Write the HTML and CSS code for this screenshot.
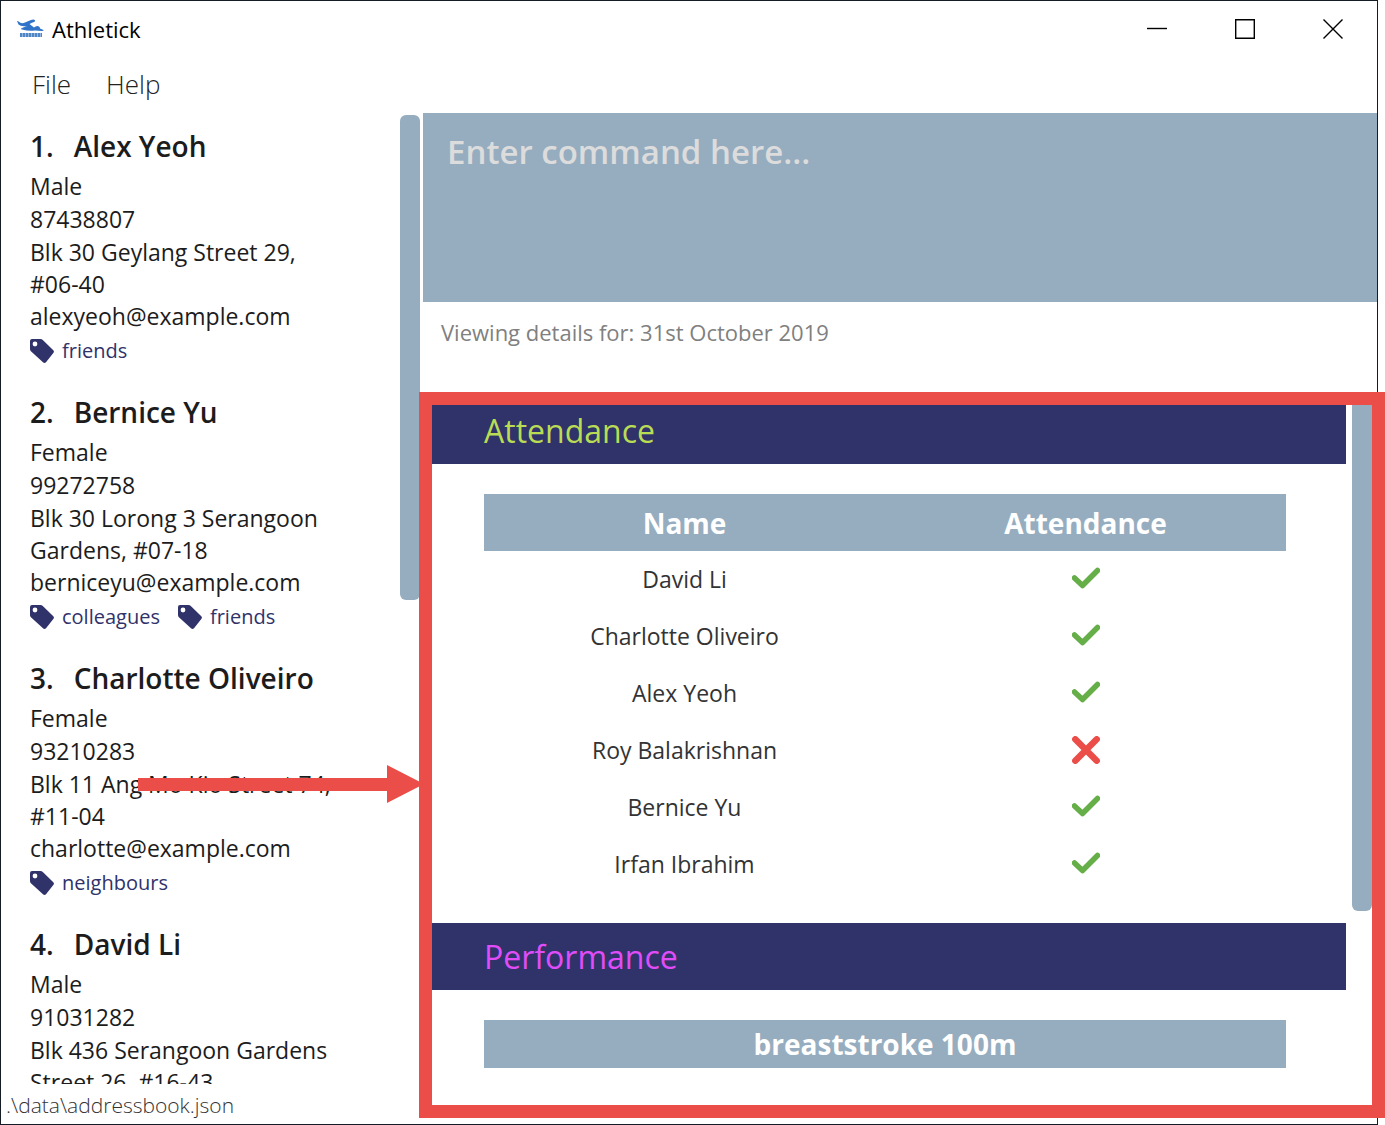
FILE: index.html
```html
<!DOCTYPE html>
<html lang="en">
<head>
<meta charset="utf-8">
<title>Athletick</title>
<link rel="stylesheet" href="styles.css">
</head>
<body>
<svg class="sprites" aria-hidden="true">
  <symbol id="tag" viewBox="0 0 24 24"><path fill-rule="evenodd" d="M2 0H10.500Q11.800 0 12.800 .9L23.300 11.200Q24.600 12.600 23.300 14L16 23.200Q14.500 24.700 13 23.300L.9 12.200Q0 11.300 0 10V2Q0 0 2 0ZM5 2.600A2.400 2.400 0 1 0 5 7.400A2.400 2.400 0 1 0 5 2.600Z"/></symbol>
  <symbol id="check" viewBox="0 0 28 28"><path d="M2.500 13L10.500 20.500L25.500 5.500" fill="none" stroke="#65ae48" stroke-width="5.500" stroke-linecap="round" stroke-linejoin="round"/></symbol>
  <symbol id="cross" viewBox="0 0 28 28"><path d="M3.300 3.300L24.700 24.700M24.700 3.300L3.300 24.700" fill="none" stroke="#eb4d49" stroke-width="6.500" stroke-linecap="round"/></symbol>
</svg>

<div class="window">
  <header class="titlebar">
    <svg class="logo" viewBox="0 0 27 19" aria-hidden="true">
      <path fill="#2f74c8" d="M0 1.500Q1 1 3 3Q5 4.500 8 3L14 .5Q17-.5 18 .8Q18.500 2.300 15 3.300L12.500 4.500L17 8Q18 7 20 6.500Q23 6.500 23 9L26.500 10.500Q27 11.500 25 11.500Q21 11 18 11Q12 12 5 10Q3 9.500 5 8.500L10 6.500Q4 7.500 1.500 5Z"/>
      <path fill="none" stroke="#4f86c6" stroke-width="4" stroke-dasharray="2.600 .4" d="M3 15.500H25"/>
    </svg>
    <h1 class="title">Athletick</h1>
    <div class="window-buttons">
      <button class="window-button" aria-label="Minimize"><svg viewBox="0 0 20 20"><path d="M0 9.500H20"/></svg></button>
      <button class="window-button" aria-label="Maximize"><svg viewBox="0 0 20 20"><path d="M.7 .7H19.300V19.300H.7Z"/></svg></button>
      <button class="window-button" aria-label="Close"><svg viewBox="0 0 20 20"><path d="M.5 .5L19.500 19.500M19.500 .5L.5 19.500"/></svg></button>
    </div>
  </header>

  <nav class="menubar">
    <button class="menu">File</button>
    <button class="menu">Help</button>
  </nav>

  <main class="content">
    <aside class="sidebar">
      <ol class="people">
        <li class="person">
          <h2 class="person-name"><span>1.</span><span>Alex Yeoh</span></h2>
          <p>Male</p>
          <p>87438807</p>
          <p class="address">Blk 30 Geylang Street 29, <span class="unit">#06-40</span></p>
          <p>alexyeoh@example.com</p>
          <div class="tags"><span class="tag"><svg><use href="#tag"/></svg>friends</span></div>
        </li>
        <li class="person">
          <h2 class="person-name"><span>2.</span><span>Bernice Yu</span></h2>
          <p>Female</p>
          <p>99272758</p>
          <p class="address">Blk 30 Lorong 3 Serangoon Gardens, <span class="unit">#07-18</span></p>
          <p>berniceyu@example.com</p>
          <div class="tags"><span class="tag"><svg><use href="#tag"/></svg>colleagues</span><span class="tag"><svg><use href="#tag"/></svg>friends</span></div>
        </li>
        <li class="person">
          <h2 class="person-name"><span>3.</span><span>Charlotte Oliveiro</span></h2>
          <p>Female</p>
          <p>93210283</p>
          <p class="address">Blk 11 Ang Mo Kio Street 74, <span class="unit">#11-04</span></p>
          <p>charlotte@example.com</p>
          <div class="tags"><span class="tag"><svg><use href="#tag"/></svg>neighbours</span></div>
        </li>
        <li class="person">
          <h2 class="person-name"><span>4.</span><span>David Li</span></h2>
          <p>Male</p>
          <p>91031282</p>
          <p class="address">Blk 436 Serangoon Gardens Street 26, <span class="unit">#16-43</span></p>
        </li>
      </ol>
      <div class="scroll-thumb people-thumb"></div>
    </aside>

    <section class="workspace">
      <textarea class="command" aria-label="Command" placeholder="Enter command here..."></textarea>
      <p class="result">Viewing details for: 31st October 2019</p>

      <div class="details">
        <div class="details-body">
          <h2 class="section-title attendance-title">Attendance</h2>
          <table class="sheet">
            <thead><tr><th>Name</th><th>Attendance</th></tr></thead>
            <tbody>
              <tr><td>David Li</td><td><svg class="mark" role="img" aria-label="Present"><use href="#check"/></svg></td></tr>
              <tr><td>Charlotte Oliveiro</td><td><svg class="mark" role="img" aria-label="Present"><use href="#check"/></svg></td></tr>
              <tr><td>Alex Yeoh</td><td><svg class="mark" role="img" aria-label="Present"><use href="#check"/></svg></td></tr>
              <tr><td>Roy Balakrishnan</td><td><svg class="mark" role="img" aria-label="Absent"><use href="#cross"/></svg></td></tr>
              <tr><td>Bernice Yu</td><td><svg class="mark" role="img" aria-label="Present"><use href="#check"/></svg></td></tr>
              <tr><td>Irfan Ibrahim</td><td><svg class="mark" role="img" aria-label="Present"><use href="#check"/></svg></td></tr>
            </tbody>
          </table>
          <h2 class="section-title performance-title">Performance</h2>
          <h3 class="event">breaststroke 100m</h3>
        </div>
        <div class="scroll-thumb details-thumb"></div>
        <div class="callout"></div>
        <svg class="callout-arrow" viewBox="0 0 286 38" aria-hidden="true"><path d="M0 13H249V0L286 19L249 38V26H0Z"/></svg>
      </div>
    </section>
  </main>

  <footer class="statusbar">.\data\addressbook.json</footer>
</div>
</body>
</html>
```

FILE: styles.css
```css
* { box-sizing: border-box; }

body {
  margin: 0;
  background: #fff;
  color: #1c1c1c;
  font-family: "Open Sans", "Noto Sans", sans-serif;
  font-size: 23px;
}

h1, h2, h3, p, ol { margin: 0; padding: 0; }
button { border: 0; background: none; padding: 0; font: inherit; color: inherit; }
.sprites { display: none; }

.window {
  display: flex;
  flex-direction: column;
  height: 100vh;
  margin-right: 7px;
  border: 1px solid #161c26;
}

.titlebar {
  display: flex;
  align-items: center;
  height: 55px;
  flex: none;
  padding-left: 16px;
}
.logo { width: 27px; height: 20px; margin-right: 8px; }
.title { font-size: 22px; font-weight: 400; color: #000; }
.window-buttons { display: flex; margin-left: auto; }
.window-button { width: 88px; height: 54px; display: grid; place-items: center; }
.window-button svg { width: 20px; height: 20px; fill: none; stroke: #000; stroke-width: 1.4; }

.menubar { display: flex; gap: 35px; height: 57px; flex: none; padding-left: 31px; }
.menu { font-size: 26px; font-weight: 300; color: #222; line-height: 57px; }

.content { flex: 1; min-height: 0; display: flex; }

.sidebar { display: flex; width: 422px; flex: none; overflow: hidden; }
.people { flex: 1; list-style: none; padding-left: 29px; }
.person { height: 266px; padding: 13px 48px 0 0; line-height: 33px; }
.person-name {
  display: flex;
  gap: 20px;
  margin-bottom: 4px;
  font-size: 28px;
  font-weight: 600;
  line-height: 40px;
}
.address { line-height: 32px; }
.unit { white-space: nowrap; }
.tags { display: flex; gap: 18px; margin-top: 1px; color: #30326a; font-size: 20px; }
.tag { display: flex; align-items: center; gap: 8px; }
.tag svg { width: 24px; height: 24px; fill: #30326a; }

.scroll-thumb { flex: none; width: 20px; border-radius: 6px; background: #96adc0; }
.people-thumb { height: 485px; margin: 2px 3px 0 0; }

.workspace { flex: 1; min-width: 0; display: flex; flex-direction: column; }
.command {
  display: block;
  flex: none;
  width: 100%;
  height: 189px;
  padding: 17px 24px;
  border: 0;
  background: #96adc0;
  color: #fff;
  font: 600 33px/44px "Open Sans", "Noto Sans", sans-serif;
  resize: none;
}
.command::placeholder { color: #dcdcdc; opacity: 1; }
.result { height: 95px; flex: none; padding-left: 18px; color: #808080; font-size: 22px; line-height: 60px; }

.details { position: relative; flex: 1; min-height: 0; display: flex; }
.details-body { flex: 1; padding-left: 8px; }
.section-title { height: 67px; padding-left: 53px; background: #30326a; font-size: 32px; font-weight: 400; line-height: 67px; }
.attendance-title { color: #b9dc55; }
.performance-title { color: #e04df8; }
.sheet {
  width: calc(100% - 113px);
  margin: 30px 60px 30px 53px;
  border-collapse: collapse;
  table-layout: fixed;
  text-align: center;
  color: #333;
}
.sheet th, .sheet td { height: 57px; padding: 0; }
.sheet td { padding-bottom: 2px; }
.sheet th, .event { background: #96adc0; color: #fff; font-size: 28px; font-weight: 700; }
.mark { display: block; width: 28px; height: 28px; margin: 0 auto; }
.event { margin: 30px 60px 0 53px; line-height: 48px; text-align: center; }
.details-thumb { height: 514px; margin: 0 5px 0 6px; }

.callout {
  position: absolute;
  inset: -5px -8px -34px -4px;
  border: 13px solid #eb4d49;
}
.callout-arrow { position: absolute; top: 368px; left: -285px; width: 286px; height: 38px; fill: #eb4d49; }

.statusbar { height: 40px; flex: none; padding-left: 5px; font-size: 21px; font-weight: 300; line-height: 42px; color: #333; }
```
